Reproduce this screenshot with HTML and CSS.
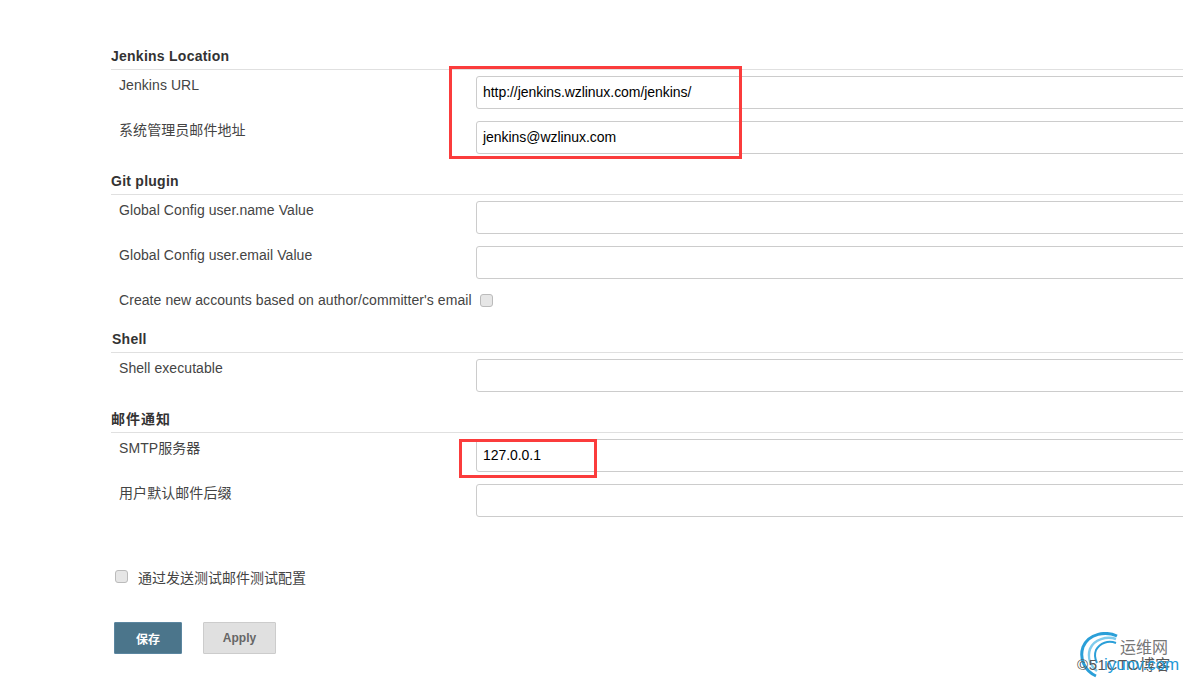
FILE: index.html
```html
<!DOCTYPE html>
<html lang="zh">
<head>
<meta charset="utf-8">
<title>Jenkins configuration</title>
<link rel="stylesheet" href="styles.css">
</head>
<body>
<main class="page">
  <section class="section section-location">
    <h2 class="section-title">Jenkins Location</h2>
    <div class="row"><label class="label">Jenkins URL</label><div class="field">http://jenkins.wzlinux.com/jenkins/</div></div>
    <div class="row"><label class="label">系统管理员邮件地址</label><div class="field">jenkins@wzlinux.com</div></div>
  </section>
  <section class="section section-git">
    <h2 class="section-title">Git plugin</h2>
    <div class="row"><label class="label">Global Config user.name Value</label><div class="field"></div></div>
    <div class="row"><label class="label">Global Config user.email Value</label><div class="field"></div></div>
    <div class="row row-check"><label class="label">Create new accounts based on author/committer's email</label><span class="check check-inline"></span></div>
  </section>
  <section class="section section-shell">
    <h2 class="section-title">Shell</h2>
    <div class="row"><label class="label">Shell executable</label><div class="field"></div></div>
  </section>
  <section class="section section-mail">
    <h2 class="section-title title-cjk">邮件通知</h2>
    <div class="row"><label class="label">SMTP服务器</label><div class="field">127.0.0.1</div></div>
    <div class="row"><label class="label">用户默认邮件后缀</label><div class="field"></div></div>
  </section>
  <div class="test-row"><span class="check"></span><span class="test-label">通过发送测试邮件测试配置</span></div>
  <div class="buttons">
    <button class="btn btn-save" type="button">保存</button>
    <button class="btn btn-apply" type="button">Apply</button>
  </div>
</main>
<div class="mark mark-a"></div>
<div class="mark mark-b"></div>
<div class="watermark">
  <svg class="wm-logo" width="40" height="46" viewBox="0 0 40 46" fill="none">
    <path d="M37 4C26 -1 9 1 3 15C-1 27 5 39 16 44" stroke="#2a9fd8" stroke-width="3"/>
    <path d="M36 7C27 4 14 7 10 17C7 26 11 34 17 39" stroke="#7fcbec" stroke-width="2.5"/>
    <path d="M36 11C28 8 20 11 16 18C14 23 15 27 17 31" stroke="#2a9fd8" stroke-width="2"/>
  </svg>
  <span class="wm-cn">运维网</span>
  <span class="wm-sub">©51CTO博客</span>
  <span class="wm-en">iyunv.com</span>
</div>
</body>
</html>
```

FILE: styles.css
```css
* { box-sizing: border-box; }
html, body { margin: 0; padding: 0; }
body {
  width: 1183px;
  height: 681px;
  overflow: hidden;
  position: relative;
  background: #fff;
  color: #333;
  font-family: "Liberation Sans", "Noto Sans CJK SC", sans-serif;
  font-size: 14px;
}
.page { padding: 48px 0 0 111px; }
.section-location { margin-bottom: 19px; }
.section-git { margin-bottom: 22px; }
.section-shell { margin-bottom: 19px; }
.section-title {
  margin: 0 0 6px;
  height: 22px;
  border-bottom: 1px solid #e0e0e0;
  font-size: 14px;
  line-height: 17px;
  font-weight: 700;
  letter-spacing: 0.25px;
  color: #333;
}
.title-cjk {
  font-family: "Noto Sans CJK SC", sans-serif;
  line-height: 15px;
  letter-spacing: 1px;
}
.section-shell .section-title { padding-left: 1px; }
.row {
  display: flex;
  height: 33px;
  margin-bottom: 12px;
}
.row:last-child { margin-bottom: 0; }
.label {
  width: 365px;
  flex: none;
  padding: 1px 0 0 8px;
  line-height: 17px;
  letter-spacing: 0.07px;
  color: #444;
  white-space: nowrap;
}
.field {
  flex: none;
  width: 730px;
  height: 33px;
  border: 1px solid #ccc;
  border-radius: 3px;
  padding: 0 6px;
  line-height: 30px;
  letter-spacing: -0.05px;
  color: #000;
  background: #fff;
}
.row-check { height: 18px; padding-top: 1px; margin-bottom: 0; }
.row-check .label { padding-top: 0; width: 369px; }
.check {
  display: block;
  flex: none;
  width: 13px;
  height: 13px;
  border: 1px solid #bbb;
  border-radius: 3px;
  background: #e6e6e6;
}
.check-inline { margin-top: 2px; }
.test-row {
  display: flex;
  align-items: center;
  margin: 50px 0 0 4px;
  height: 20px;
}
.test-row .check { margin-bottom: 2px; }
.test-label { margin-left: 10px; color: #444; }
.buttons { display: flex; gap: 21px; margin: 35px 0 0 3px; }
.btn {
  height: 32px;
  padding: 0;
  border-radius: 1px;
  font-family: "Liberation Sans", "Noto Sans CJK SC", sans-serif;
  font-size: 12px;
  font-weight: 700;
}
.btn-save { width: 68px; background: #4b758b; border: 1px solid #5b86a0; color: #fff; }
.btn-apply { width: 73px; background: #e0e0e0; border: 1px solid #ccc; color: #666; }
.mark { position: absolute; border: 3px solid #fb3c3c; }
.mark-a { left: 449px; top: 66px; width: 293px; height: 93px; }
.mark-b { left: 459px; top: 439px; width: 138px; height: 39px; }
.watermark { position: absolute; left: 1060px; top: 620px; width: 123px; height: 61px; }
.wm-logo { position: absolute; left: 20px; top: 12px; }
.wm-cn { position: absolute; left: 60px; top: 19px; font-size: 16px; line-height: 18px; color: #777; }
.wm-sub { position: absolute; left: 17px; top: 36px; font-size: 15px; line-height: 18px; letter-spacing: 0.6px; color: #555; white-space: nowrap; }
.wm-en { position: absolute; left: 44px; top: 36px; font-size: 17px; line-height: 18px; color: #1f9bd8; white-space: nowrap; }
```
